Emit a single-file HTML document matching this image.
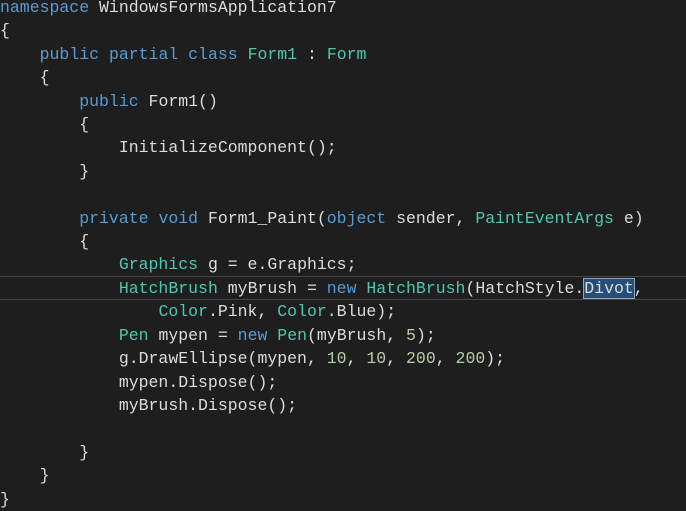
<!DOCTYPE html>
<html><head><style>
html,body{margin:0;padding:0;background:#1e1e1e;width:686px;height:500px;overflow:hidden}
pre{margin:0;position:absolute;left:0;top:-4px;font-family:"Liberation Mono",monospace;font-size:16.5px;line-height:23.4px;color:#dcdcdc}
.k{color:#569cd6}.t{color:#4ec9b0}.n{color:#b5cea8}
.cur{position:absolute;left:0;top:276px;width:686px;height:22px;border-top:1px solid #464646;border-bottom:1px solid #464646}
.sel{background:#264f78;outline:1px solid #8aa6c1}
</style></head><body>
<div class="cur"></div>
<pre><span class="k">namespace</span> WindowsFormsApplication7
{
    <span class="k">public</span> <span class="k">partial</span> <span class="k">class</span> <span class="t">Form1</span> : <span class="t">Form</span>
    {
        <span class="k">public</span> Form1()
        {
            InitializeComponent();
        }

        <span class="k">private</span> <span class="k">void</span> Form1_Paint(<span class="k">object</span> sender, <span class="t">PaintEventArgs</span> e)
        {
            <span class="t">Graphics</span> g = e.Graphics;
            <span class="t">HatchBrush</span> myBrush = <span class="k">new</span> <span class="t">HatchBrush</span>(HatchStyle.<span class="sel">Divot</span>,
                <span class="t">Color</span>.Pink, <span class="t">Color</span>.Blue);
            <span class="t">Pen</span> mypen = <span class="k">new</span> <span class="t">Pen</span>(myBrush, <span class="n">5</span>);
            g.DrawEllipse(mypen, <span class="n">10</span>, <span class="n">10</span>, <span class="n">200</span>, <span class="n">200</span>);
            mypen.Dispose();
            myBrush.Dispose();

        }
    }
}</pre>
</body></html>
